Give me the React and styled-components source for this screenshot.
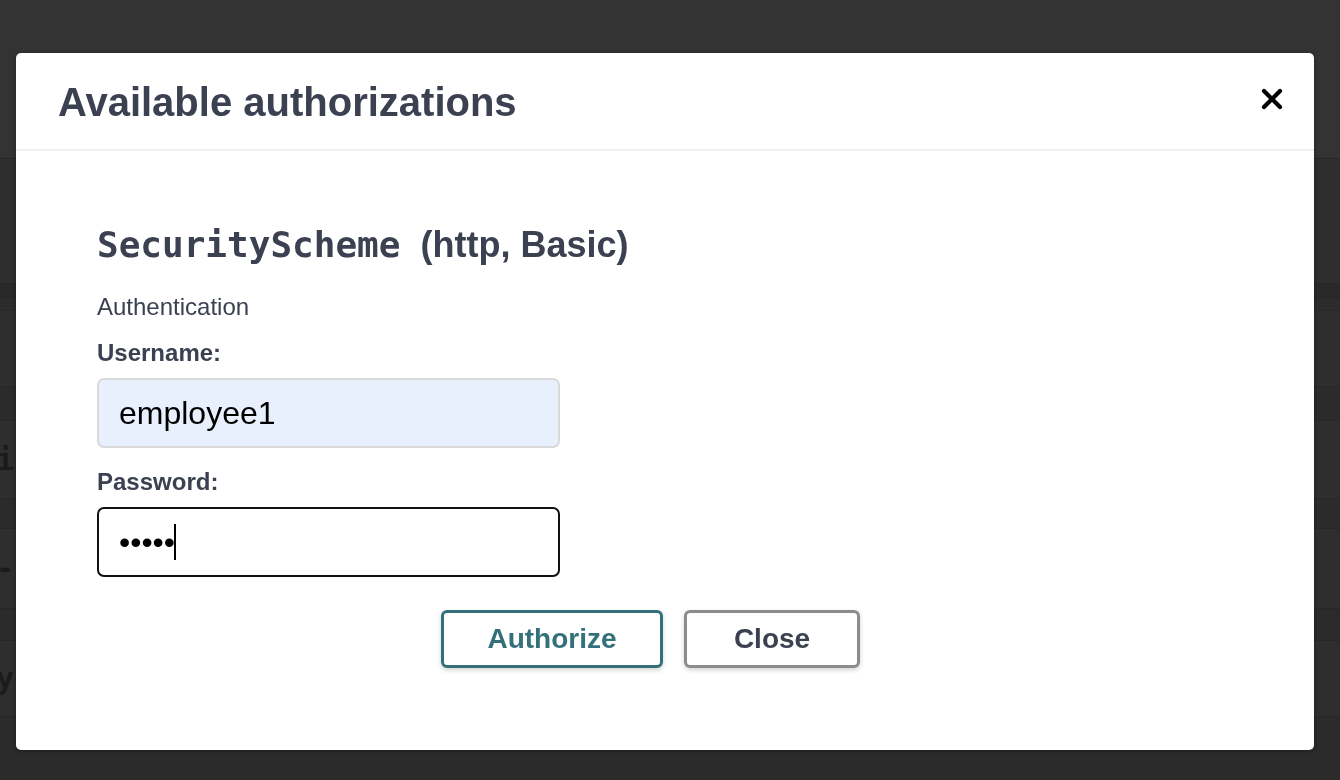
import React from "react";
import styled, { createGlobalStyle } from "styled-components";

const GlobalStyle = createGlobalStyle`
  html, body {
    margin: 0;
    padding: 0;
    background: #2e2e2e;
    font-family: "Liberation Sans", Arial, sans-serif;
  }
  * { box-sizing: border-box; }
`;

const backdropRows = [
  { h: 158, bg: "#333333" },
  { h: 125, bg: "#2e2e2e" },
  { h: 14, bg: "#292929" },
  { h: 13, bg: "#2c2c2c" },
  { h: 76, bg: "#2e2e2e" },
  { h: 34, bg: "#2b2b2b" },
  { h: 78, bg: "#2e2e2e", text: "ic" },
  { h: 30, bg: "#2b2b2b" },
  { h: 80, bg: "#2e2e2e", text: "-" },
  { h: 32, bg: "#2b2b2b" },
  { h: 76, bg: "#2e2e2e", text: "y." },
  { h: 64, bg: "#2b2b2b" },
];

export default function App() {
  return (
    <>
      <GlobalStyle />
      <Page>
        {backdropRows.map((r, i) => (
          <BackRow key={i} $h={r.h} $bg={r.bg}>
            {r.text && <BackText>{r.text}</BackText>}
          </BackRow>
        ))}
      </Page>

      <Modal>
        <Header>
          <Title>Available authorizations</Title>
          <CloseIcon viewBox="0 0 22 22" aria-label="close">
            <path d="M3 3 L19 19 M19 3 L3 19" />
          </CloseIcon>
        </Header>

        <Body>
          <SchemeTitle>
            <code>SecurityScheme</code>
            <span>(http, Basic)</span>
          </SchemeTitle>
          <Caption>Authentication</Caption>

          <Label>Username:</Label>
          <Field $autofill>employee1</Field>

          <Label>Password:</Label>
          <Field $focused>
            <Dots>•••••</Dots>
            <Caret />
          </Field>

          <Actions>
            <Button $tone="primary">Authorize</Button>
            <Button>Close</Button>
          </Actions>
        </Body>
      </Modal>
    </>
  );
}

const Page = styled.div`
  display: flex;
  flex-direction: column;
  height: 780px;
  overflow: hidden;
`;

const BackRow = styled.div`
  flex: 0 0 ${(p) => p.$h}px;
  background: ${(p) => p.$bg};
  border-top: 1px solid #272727;
  display: flex;
  align-items: center;

  &:first-child {
    border-top: none;
  }
`;

const BackText = styled.span`
  font-family: "DejaVu Sans Mono", monospace;
  font-weight: bold;
  font-size: 30px;
  color: #1b1b1b;
  margin-left: -4px;
`;

const Modal = styled.div`
  position: fixed;
  left: 16px;
  top: 53px;
  width: 1298px;
  height: 697px;
  background: #ffffff;
  border-radius: 5px;
  box-shadow: 0 1px 4px rgba(0, 0, 0, 0.35);
  display: flex;
  flex-direction: column;
`;

const Header = styled.div`
  display: flex;
  align-items: center;
  justify-content: space-between;
  padding: 26px 31px 24px 42px;
  border-bottom: 2px solid #efefef;
`;

const Title = styled.h3`
  margin: 0;
  font-size: 40px;
  line-height: 46px;
  font-weight: bold;
  color: #3b4151;
`;

const CloseIcon = styled.svg`
  width: 22px;
  height: 22px;
  margin-top: -6px;
  fill: none;
  stroke: #000;
  stroke-width: 4.2;
  stroke-linecap: round;
`;

const Body = styled.div`
  display: flex;
  flex-direction: column;
  align-items: flex-start;
  padding: 72px 110px 0 81px;
`;

const SchemeTitle = styled.h4`
  margin: 0;
  display: flex;
  align-items: baseline;
  gap: 20px;
  color: #3b4151;
  line-height: 44px;

  & code {
    font-family: "DejaVu Sans Mono", monospace;
    font-weight: bold;
    font-size: 36px;
  }

  & span {
    font-family: "Liberation Sans", Arial, sans-serif;
    font-weight: bold;
    font-size: 36px;
  }
`;

const Caption = styled.p`
  margin: 26px 0 0;
  font-size: 24px;
  line-height: 28px;
  color: #3b4151;
`;

const Label = styled.label`
  display: block;
  margin-top: 18px;
  font-size: 24px;
  line-height: 28px;
  font-weight: bold;
  color: #3b4151;
`;

const Field = styled.div`
  margin-top: 11px;
  width: 463px;
  height: 70px;
  display: flex;
  align-items: center;
  padding-left: 20px;
  font-size: 32px;
  color: #000;
  border-radius: 7px;
  background: ${(p) => (p.$autofill ? "#e8f0fe" : "#ffffff")};
  border: 2px solid ${(p) => (p.$focused ? "#111111" : "#d9d9d9")};
  margin-bottom: ${(p) => (p.$focused ? "0" : "2px")};
`;

const Dots = styled.span`
  font-size: 32px;
  line-height: 1;
`;

const Caret = styled.span`
  width: 2px;
  height: 36px;
  background: #000;
  margin-left: -1px;
`;

const Actions = styled.div`
  align-self: stretch;
  display: flex;
  justify-content: center;
  gap: 21px;
  margin-top: 33px;
`;

const Button = styled.button`
  height: 58px;
  padding: 0;
  width: ${(p) => (p.$tone === "primary" ? "222px" : "176px")};
  font-family: "Liberation Sans", Arial, sans-serif;
  font-size: 28px;
  font-weight: bold;
  background: #ffffff;
  border-radius: 6px;
  border: 3px solid ${(p) => (p.$tone === "primary" ? "#34707a" : "#8c8c8c")};
  color: ${(p) => (p.$tone === "primary" ? "#34707a" : "#3b4151")};
  box-shadow: 0 2px 5px rgba(0, 0, 0, 0.18);
  cursor: pointer;
`;
